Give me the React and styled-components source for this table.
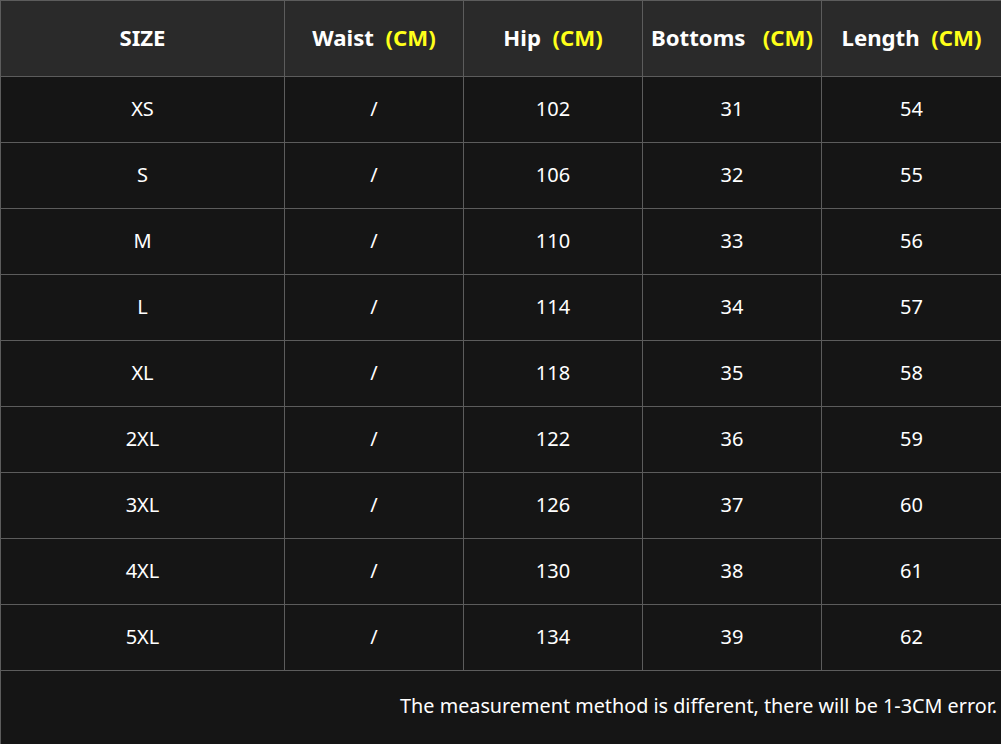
import React from "react";
import styled, { createGlobalStyle } from "styled-components";

const GlobalStyle = createGlobalStyle`
  body {
    margin: 0;
    background-color: #151515;
    font-family: "Noto Sans", "Open Sans", sans-serif;
  }
`;

const Table = styled.div`
  display: grid;
  grid-template-columns: 284px 179px 179px 179px 1fr;
  grid-template-rows: 76px repeat(9, 66px) 74px;
  width: 1001px;
  box-sizing: border-box;
  border-left: 1px solid #5c5c5c;
  border-top: 1px solid #5c5c5c;
  background-color: #151515;
  color: #ffffff;
`;

const Cell = styled.div`
  box-sizing: border-box;
  display: flex;
  align-items: center;
  justify-content: center;
  padding-bottom: 2px;
  white-space: nowrap;
  border-right: ${(p) => (p.$last ? "none" : "1px solid #5c5c5c")};
  border-bottom: 1px solid #5c5c5c;
  background-color: ${(p) => (p.$head ? "#2a2a2a" : "#151515")};
  font-size: ${(p) => (p.$head ? "22.2px" : "20px")};
  font-weight: ${(p) => (p.$head ? 700 : 400)};
`;

const Unit = styled.span`
  color: #ffff1a;
  white-space: pre;
`;

const Note = styled.div`
  grid-column: 1 / -1;
  display: flex;
  align-items: center;
  justify-content: flex-end;
  padding: 0 4px 5px 0;
  font-size: 19.8px;
  color: #ffffff;
`;

const headers = [
  { label: "SIZE" },
  { label: "Waist", gap: "  " },
  { label: "Hip", gap: "  " },
  { label: "Bottoms", gap: "   " },
  { label: "Length", gap: "  " },
];

const rows = [
  ["XS", "/", "102", "31", "54"],
  ["S", "/", "106", "32", "55"],
  ["M", "/", "110", "33", "56"],
  ["L", "/", "114", "34", "57"],
  ["XL", "/", "118", "35", "58"],
  ["2XL", "/", "122", "36", "59"],
  ["3XL", "/", "126", "37", "60"],
  ["4XL", "/", "130", "38", "61"],
  ["5XL", "/", "134", "39", "62"],
];

const App = () => {
  return (
    <>
      <GlobalStyle />
      <Table>
        {headers.map((h, i) => (
          <Cell key={h.label} $head $last={i === headers.length - 1}>
            {h.label}
            {h.gap && <Unit>{h.gap}(CM)</Unit>}
          </Cell>
        ))}
        {rows.map((row) =>
          row.map((v, i) => (
            <Cell key={row[0] + i} $last={i === row.length - 1}>
              {v}
            </Cell>
          ))
        )}
        <Note>The measurement method is different, there will be 1-3CM error.</Note>
      </Table>
    </>
  );
};

export default App;
